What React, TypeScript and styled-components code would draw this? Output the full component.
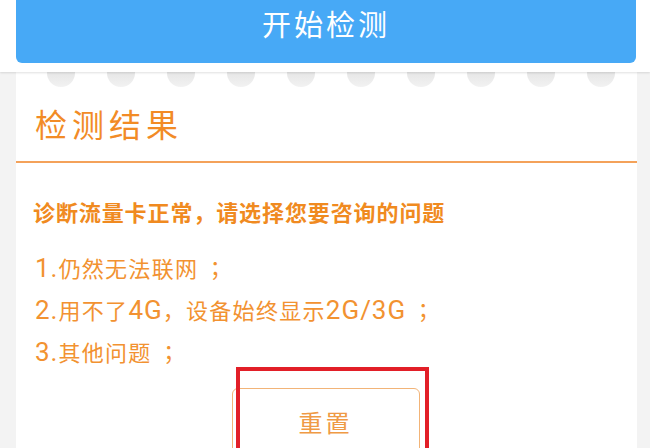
import React from "react";
import styled, { createGlobalStyle } from "styled-components";

const Global = createGlobalStyle`
  html, body {
    margin: 0;
    padding: 0;
    background: #f3f3f3;
    overflow: hidden;
  }
  body {
    font-family: "Noto Sans", "Noto Sans CJK JP", sans-serif;
  }
`;

const Page = styled.div`
  width: 650px;
  min-height: 448px;
  background: #f3f3f3;
  display: flex;
  flex-direction: column;
`;

const TopBar = styled.div`
  background: #ffffff;
  height: 72px;
  padding: 0 14px 0 16px;
  box-shadow: 0 1px 2px rgba(0, 0, 0, 0.12);
  position: relative;
  z-index: 1;
  display: flex;
  flex-direction: column;
`;

const StartButton = styled.div`
  margin-top: -18px;
  height: 81px;
  border-radius: 6px;
  background: #47a9f6;
  color: #ffffff;
  font-size: 29px;
  letter-spacing: 3px;
  display: flex;
  align-items: center;
  justify-content: center;
`;

const Card = styled.div`
  margin: 0 13px 0 16px;
  background: #ffffff;
  display: flex;
  flex-direction: column;
`;

const Bumps = styled.div`
  display: flex;
  gap: 32px;
  padding-left: 31px;
  height: 15px;
`;

const Bump = styled.div`
  width: 28px;
  height: 15px;
  border-radius: 0 0 14px 14px;
  background: linear-gradient(#e6e6e6, #f2f2f2);
`;

const Title = styled.div`
  padding: 18px 19px 16px;
  line-height: 40px;
  font-size: 32px;
  letter-spacing: 5px;
  color: #f28b26;
  border-bottom: 2px solid #f4a25a;
`;

const Body = styled.div`
  padding: 34px 19px 0 17px;
  display: flex;
  flex-direction: column;
`;

const Notice = styled.div`
  font-size: 22px;
  line-height: 30px;
  font-weight: 700;
  letter-spacing: 0.9px;
  color: #f08a20;
`;

const List = styled.div`
  margin-top: 19px;
  padding-left: 2px;
  display: flex;
  flex-direction: column;
`;

const Item = styled.div`
  font-family: "Noto Sans CJK JP", sans-serif;
  font-size: 22px;
  line-height: 42px;
  letter-spacing: 1.3px;
  color: #f29231;
`;

const Latin = styled.span`
  font-family: Roboto, "Noto Sans", sans-serif;
  font-size: 26px;
  line-height: 1;
  letter-spacing: 1px;
`;

const Semi = styled.span`
  margin-left: 6px;
`;

const ButtonRow = styled.div`
  margin-top: 16px;
  display: flex;
  justify-content: center;
`;

const ResetWrap = styled.div`
  position: relative;
`;

const ResetButton = styled.div`
  width: 186px;
  height: 64px;
  border: 1.5px solid #f2b478;
  border-radius: 6px;
  display: flex;
  align-items: center;
  justify-content: center;
  font-size: 24px;
  letter-spacing: 3px;
  color: #ef9a45;
`;

const Highlight = styled.div`
  position: absolute;
  left: 4px;
  top: -21px;
  width: 185px;
  height: 100px;
  border: 4px solid #e21f28;
  pointer-events: none;
`;

export default function App() {
  const bumps = Array.from({ length: 10 });
  return (
    <Page>
      <Global />
      <TopBar>
        <StartButton>开始检测</StartButton>
      </TopBar>
      <Card>
        <Bumps>
          {bumps.map((_, i) => (
            <Bump key={i} />
          ))}
        </Bumps>
        <Title>检测结果</Title>
        <Body>
          <Notice>诊断流量卡正常，请选择您要咨询的问题</Notice>
          <List>
            <Item>
              <Latin>1.</Latin>仍然无法联网<Semi>；</Semi>
            </Item>
            <Item>
              <Latin>2.</Latin>用不了<Latin>4G</Latin>，设备始终显示
              <Latin>2G/3G</Latin>
              <Semi>；</Semi>
            </Item>
            <Item>
              <Latin>3.</Latin>其他问题<Semi>；</Semi>
            </Item>
          </List>
          <ButtonRow>
            <ResetWrap>
              <ResetButton>重置</ResetButton>
              <Highlight />
            </ResetWrap>
          </ButtonRow>
        </Body>
      </Card>
    </Page>
  );
}
